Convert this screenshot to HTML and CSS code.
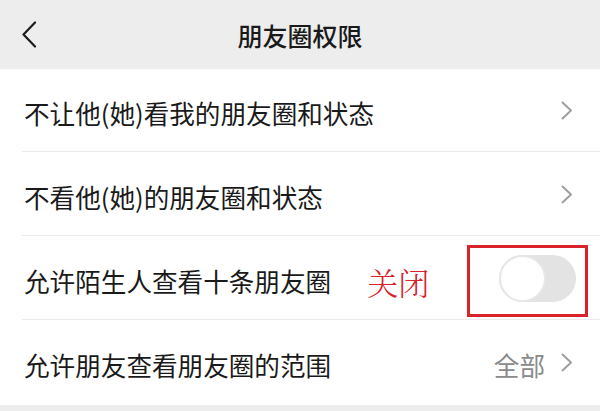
FILE: index.html
```html
<!DOCTYPE html>
<html lang="zh-CN">
<head>
<meta charset="utf-8">
<title>朋友圈权限</title>
<link rel="stylesheet" href="styles.css">
</head>
<body>
<div class="page">
  <header class="topbar">
    <span class="back">
      <svg width="16" height="27" viewBox="0 0 16 27"><path d="M14 1.5 L2.5 13.5 L14 25.5" fill="none" stroke="#1c1c1c" stroke-width="2.2" stroke-linecap="round" stroke-linejoin="round"/></svg>
    </span>
    <h1 class="title">朋友圈权限</h1>
  </header>
  <ul class="list">
    <li class="row">
      <span class="label">不让他(她)看我的朋友圈和状态</span>
      <span class="chev"><svg width="12" height="19" viewBox="0 0 12 19"><path d="M1.5 1.5 L10 9.5 L1.5 17.5" fill="none" stroke="#9e9e9e" stroke-width="1.9" stroke-linecap="round" stroke-linejoin="round"/></svg></span>
    </li>
    <li class="row">
      <span class="label">不看他(她)的朋友圈和状态</span>
      <span class="chev"><svg width="12" height="19" viewBox="0 0 12 19"><path d="M1.5 1.5 L10 9.5 L1.5 17.5" fill="none" stroke="#9e9e9e" stroke-width="1.9" stroke-linecap="round" stroke-linejoin="round"/></svg></span>
    </li>
    <li class="row">
      <span class="label">允许陌生人查看十条朋友圈</span>
      <span class="note">关闭</span>
      <span class="switch-wrap">
        <span class="switch"><span class="knob"></span></span>
        <span class="mark"></span>
      </span>
    </li>
    <li class="row">
      <span class="label">允许朋友查看朋友圈的范围</span>
      <span class="value">全部</span>
      <span class="chev"><svg width="12" height="19" viewBox="0 0 12 19"><path d="M1.5 1.5 L10 9.5 L1.5 17.5" fill="none" stroke="#9e9e9e" stroke-width="1.9" stroke-linecap="round" stroke-linejoin="round"/></svg></span>
    </li>
  </ul>
  <div class="footer-gap"></div>
</div>
</body>
</html>
```
FILE: styles.css
```css
html, body {
  margin: 0;
  padding: 0;
  background: #ffffff;
}
.page {
  width: 600px;
  height: 411px;
  overflow: hidden;
  display: flex;
  flex-direction: column;
  font-family: "Noto Sans CJK SC", "Noto Sans", sans-serif;
  color: #1a1a1a;
}
.topbar {
  height: 69px;
  flex: none;
  background: #ededed;
  display: flex;
  align-items: center;
  position: relative;
}
.back {
  display: flex;
  margin-left: 21px;
}
.title {
  position: absolute;
  left: 0;
  right: 0;
  top: 0;
  bottom: 0;
  margin: 0;
  display: flex;
  align-items: center;
  justify-content: center;
  font-size: 25px;
  font-weight: 500;
  color: #1a1a1a;
  pointer-events: none;
}
.list {
  list-style: none;
  margin: 0;
  padding: 0;
  flex: none;
}
.row {
  height: 83px;
  display: flex;
  align-items: center;
  padding: 0 27px 0 24px;
  position: relative;
  box-sizing: content-box;
  border-bottom: 1px solid transparent;
  background-image: linear-gradient(#ebebeb, #ebebeb);
  background-repeat: no-repeat;
  background-size: calc(100% - 22px) 1px;
  background-position: 22px 100%;
}
.row:last-child {
  background-image: none;
}
.label {
  font-size: 25.6px;
  line-height: 30px;
  margin-top: 5px;
  color: #1a1a1a;
  white-space: nowrap;
}
.chev {
  margin-left: auto;
  display: flex;
}
.value {
  margin-left: auto;
  margin-right: 16px;
  font-size: 25.6px;
  line-height: 30px;
  margin-top: 5px;
  color: #8a8a8a;
}
.value + .chev {
  margin-left: 0;
}
.note {
  margin-left: 36px;
  font-family: "Noto Serif CJK SC", "AR PL UMing CN", "Noto Sans CJK SC", serif;
  font-size: 31px;
  line-height: 34px;
  margin-top: 6px;
  color: #d8232a;
  font-weight: 300;
}
.switch-wrap {
  margin-left: auto;
  margin-right: -3px;
  position: relative;
  display: flex;
}
.switch {
  width: 77px;
  height: 47px;
  border-radius: 24px;
  background: #e3e3e3;
  position: relative;
  display: block;
}
.knob {
  position: absolute;
  left: 0;
  top: 0;
  width: 43px;
  height: 43px;
  border-radius: 50%;
  background: #ffffff;
  border: 2px solid #e7e7e7;
}
.mark {
  position: absolute;
  left: -32px;
  top: -10px;
  width: 115px;
  height: 66px;
  border: 3px solid #d9232b;
}
.footer-gap {
  flex: 1;
  background: #ededed;
}
```
